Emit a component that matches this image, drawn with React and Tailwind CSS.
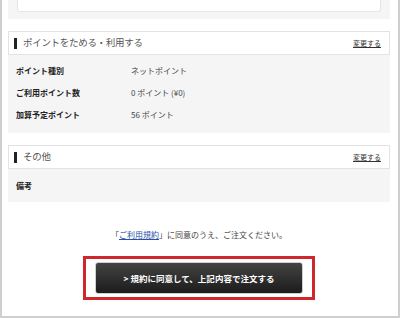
export default function App() {
  const font = { fontFamily: '"Noto Sans CJK JP", "Noto Sans", sans-serif' };
  const Header = ({ title }) => (
    <div className="h-[24px] bg-white border border-[#e3e3e3] flex items-center pl-[5px] pr-[8px]">
      <div className="w-[3px] h-[11px] bg-[#222]" />
      <div className="ml-[6px] text-[9.5px] leading-none text-[#555] tracking-[-0.3px]">{title}</div>
      <div className="ml-auto text-[7px] leading-none text-[#333] underline">変更する</div>
    </div>
  );
  const Row = ({ label, value }) => (
    <div className="h-[22px] flex items-center text-[8px] leading-none">
      <div className="w-[115px] font-bold text-[#222]">{label}</div>
      <div className="text-[#444]">{value}</div>
    </div>
  );
  return (
    <div style={font} className="w-[400px] h-[318px] bg-white border-x-2 border-b-2 border-[#cfcfcf] overflow-hidden pl-[6px] pr-[8px] flex flex-col">
      <div className="h-[19px] bg-[#f5f5f5] px-[9px] shrink-0">
        <div className="h-[12px] bg-white border-x border-b border-[#e6e6e6] rounded-b-[3px]" />
      </div>
      <div className="mt-[12px] shrink-0">
        <Header title="ポイントをためる・利用する" />
        <div className="bg-[#f5f5f5] h-[78px] pt-[5px] pl-[8px]">
          <Row label="ポイント種別" value="ネットポイント" />
          <Row label="ご利用ポイント数" value="0 ポイント (¥0)" />
          <Row label="加算予定ポイント" value="56 ポイント" />
        </div>
      </div>
      <div className="mt-[12px] shrink-0">
        <Header title="その他" />
        <div className="bg-[#f5f5f5] h-[33px] pt-[6px] pl-[8px]">
          <Row label="備考" value="" />
        </div>
      </div>
      <div className="mt-[28px] text-center text-[8px] leading-[10px] text-[#444]">
        「<span className="text-[#2a4fa8] underline">ご利用規約</span>」に同意のうえ、ご注文ください。
      </div>
      <div className="mt-[16px] flex justify-center">
        <div className="border-[3px] border-[#d1262b] px-[9px] py-[3px]">
          <div className="w-[208px] h-[32px] rounded-[3px] border border-[#cfcfcf] bg-gradient-to-b from-[#444] to-[#1c1c1c] flex items-center justify-center text-white font-bold text-[8.5px] leading-none">
            &gt; 規約に同意して、上記内容で注文する
          </div>
        </div>
      </div>
    </div>
  );
}
